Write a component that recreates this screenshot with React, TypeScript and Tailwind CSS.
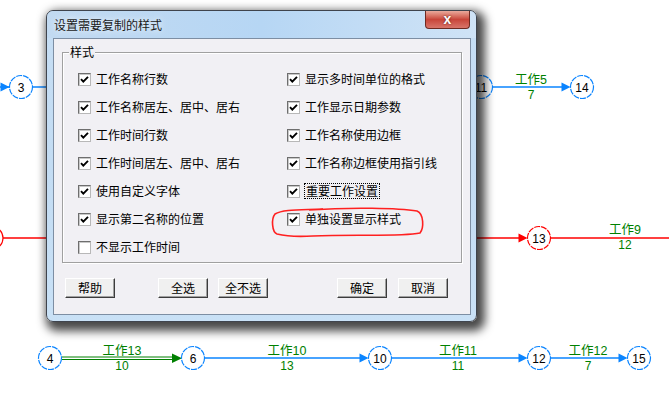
import React from "react";

const BLUE = "#0a84ff";
const GREEN = "#008000";
const RED = "#ff0000";

function Arrow({ tip, y, color }: { tip: number; y: number; color: string }) {
  return <polygon points={`${tip - 9},${y - 4.5} ${tip},${y} ${tip - 9},${y + 4.5}`} fill={color} />;
}

function Node({ x, y, label, color = BLUE }: { x: number; y: number; label: string; color?: string }) {
  return (
    <g>
      <circle cx={x} cy={y} r={11.5} fill="white" stroke={color} strokeWidth={1.2} strokeDasharray="6 1" />
      <text x={x} y={y + 4.5} textAnchor="middle" fontSize={12} fill="#000">
        {label}
      </text>
    </g>
  );
}

function Label({ x, y, name, dur }: { x: number; y: number; name: string; dur: string }) {
  return (
    <g fill={GREEN} fontSize={12.5}>
      <text x={x} y={y - 2} textAnchor="middle">
        {name}
      </text>
      <text x={x} y={y + 13} textAnchor="middle" fontSize={12}>
        {dur}
      </text>
    </g>
  );
}

function Diagram() {
  return (
    <svg
      width={669}
      height={408}
      viewBox="0 0 669 408"
      className="block font-['Liberation_Sans','Noto_Sans_CJK_SC',sans-serif]"
    >
      <rect width={669} height={408} fill="white" />
      {/* row 1 */}
      <line x1={0} y1={87} x2={10} y2={87} stroke={BLUE} strokeWidth={1.5} />
      <Arrow tip={9.5} y={87} color={BLUE} />
      <line x1={33} y1={87} x2={60} y2={87} stroke={BLUE} strokeWidth={1.5} />
      <Node x={21} y={87} label="3" />
      <line x1={470} y1={87} x2={565} y2={87} stroke={BLUE} strokeWidth={1.5} />
      <Arrow tip={570.5} y={87} color={BLUE} />
      <Node x={481} y={87} label="11" />
      <Node x={582} y={87} label="14" />
      <Label x={531} y={86} name="工作5" dur="7" />
      {/* red row */}
      <line x1={0} y1={238} x2={60} y2={238} stroke={RED} strokeWidth={1.5} />
      <circle cx={-8.5} cy={238} r={11.5} fill="white" stroke={RED} strokeWidth={1.2} />
      <line x1={470} y1={238} x2={522} y2={238} stroke={RED} strokeWidth={1.5} />
      <Arrow tip={527.5} y={238} color={RED} />
      <line x1={551} y1={238} x2={669} y2={238} stroke={RED} strokeWidth={1.5} />
      <Node x={539} y={238} label="13" color={RED} />
      <Label x={625} y={236} name="工作9" dur="12" />
      {/* bottom row */}
      <line x1={62} y1={357} x2={176} y2={357} stroke={GREEN} strokeWidth={1} />
      <line x1={62} y1={359.5} x2={176} y2={359.5} stroke={GREEN} strokeWidth={1} />
      <polygon points="172,353.5 182,358.3 172,363" fill={GREEN} />
      <Node x={50} y={358} label="4" />
      <Node x={193} y={358} label="6" />
      <Label x={122} y={357} name="工作13" dur="10" />
      <line x1={205} y1={358} x2={363} y2={358} stroke={BLUE} strokeWidth={1.5} />
      <Arrow tip={368.5} y={358} color={BLUE} />
      <Node x={380} y={358} label="10" />
      <Label x={287} y={357} name="工作10" dur="13" />
      <line x1={392} y1={358} x2={522} y2={358} stroke={BLUE} strokeWidth={1.5} />
      <Arrow tip={527.5} y={358} color={BLUE} />
      <Node x={539} y={358} label="12" />
      <Label x={458} y={357} name="工作11" dur="11" />
      <line x1={551} y1={358} x2={622} y2={358} stroke={BLUE} strokeWidth={1.5} />
      <Arrow tip={627.5} y={358} color={BLUE} />
      <Node x={639} y={358} label="15" />
      <Label x={588} y={357} name="工作12" dur="7" />
    </svg>
  );
}

function CheckBox({ checked }: { checked: boolean }) {
  return (
    <div className="w-[13px] h-[13px] shrink-0 bg-white border border-t-[#6e6e6e] border-l-[#6e6e6e] border-b-[#b8b8b8] border-r-[#b8b8b8] shadow-[inset_1px_1px_0_#c8c8c8] flex items-center justify-center">
      {checked && (
        <svg width={11} height={11} viewBox="0 0 11 11">
          <path d="M2 5.2 L4.3 7.6 L9 2.8" fill="none" stroke="#000" strokeWidth={1.9} />
        </svg>
      )}
    </div>
  );
}

function Item({ label, checked = true, focus = false }: { label: string; checked?: boolean; focus?: boolean }) {
  return (
    <div className="h-[28px] flex items-center">
      <CheckBox checked={checked} />
      <span
        className={
          focus
            ? "ml-[4px] px-[1px] leading-[14px] text-[12px] text-black border border-dotted border-black"
            : "ml-[5px] leading-[14px] text-[12px] text-black"
        }
      >
        {label}
      </span>
    </div>
  );
}

function Btn({ label, className = "" }: { label: string; className?: string }) {
  return (
    <div
      className={
        "w-[50px] h-[20px] flex items-center justify-center text-[12px] text-black bg-[#f0f0f0] border border-t-white border-l-white border-b-[#3c3c3c] border-r-[#3c3c3c] shadow-[inset_-1px_-1px_0_#a0a0a0] " +
        className
      }
    >
      {label}
    </div>
  );
}

export default function App() {
  const left = ["工作名称行数", "工作名称居左、居中、居右", "工作时间行数", "工作时间居左、居中、居右", "使用自定义字体", "显示第二名称的位置"];
  const right = ["显示多时间单位的格式", "工作显示日期参数", "工作名称使用边框", "工作名称边框使用指引线"];
  return (
    <div className="relative w-[669px] h-[408px] overflow-hidden bg-white font-['Noto_Sans_CJK_SC','Liberation_Sans',sans-serif]">
      <Diagram />
      {/* dialog window */}
      <div className="absolute left-[46px] top-[10px] w-[431px] h-[312px] rounded-[7px] border border-[#3f444d] bg-gradient-to-b from-[#c6def4] via-[#c3dcf3] to-[#c9e1f6] shadow-[4px_5px_10px_4px_rgba(0,0,0,0.72)]">
        <div className="h-[27px] flex items-center pl-[7px] rounded-t-[7px] bg-gradient-to-r from-[#c2daf1] via-[#b6d6f4] to-[#cfe3f6]">
          <span className="text-[12px] leading-[14px] text-[#1a1a1a] mt-[1px] [text-shadow:0_0_6px_#ffffff]">设置需要复制的样式</span>
        </div>
        <div className="absolute right-[6px] top-0 w-[45px] h-[18px] rounded-b-[4px] border border-t-0 border-[#6e2a22] bg-gradient-to-b from-[#e9a99c] via-[#c8453a] to-[#d8746a] flex items-center justify-center">
          <span className="text-white text-[14px] leading-[13px] font-bold font-['Liberation_Sans',sans-serif] [text-shadow:0_0_2px_#5a1a12]">x</span>
        </div>
        <div className="ml-[6px] w-[418px] h-[277px] border border-[#7d8ea3] bg-[#f1f0f4] flex flex-col">
          <div className="relative mt-[13px] mx-[8px] h-[211px] border border-[#a0a0a0] shadow-[1px_1px_0_#ffffff,inset_1px_1px_0_#ffffff]">
            <span className="absolute -top-[9px] left-[6px] px-[1px] bg-[#f1f0f4] text-[12px] leading-[16px] text-black">样式</span>
            <div className="flex pt-[12px] pl-[15px]">
              <div className="w-[209px] flex flex-col">
                {left.map((l) => (
                  <Item key={l} label={l} />
                ))}
                <Item label="不显示工作时间" checked={false} />
              </div>
              <div className="flex flex-col">
                {right.map((l) => (
                  <Item key={l} label={l} />
                ))}
                <Item label="重要工作设置" focus />
                <Item label="单独设置显示样式" />
              </div>
            </div>
          </div>
          <div className="flex mt-[15px] pl-[11px]">
            <Btn label="帮助" />
            <Btn label="全选" className="ml-[43px]" />
            <Btn label="全不选" className="ml-[10px]" />
            <Btn label="确定" className="ml-[69px]" />
            <Btn label="取消" className="ml-[11px]" />
          </div>
        </div>
        {/* red freehand annotation */}
        <svg className="absolute left-[224px] top-[195px]" width={154} height={33} viewBox="0 0 154 33">
          <path
            d="M38 4 C80 1 128 2 146 5 C153 8 153 22 149 27 C130 31 82 28 42 30 C26 31 14 30 6 28 C1 26 0 13 4 8 C12 3 30 4 52 3"
            fill="none"
            stroke="#ff2020"
            strokeWidth={1.6}
          />
        </svg>
      </div>
    </div>
  );
}
